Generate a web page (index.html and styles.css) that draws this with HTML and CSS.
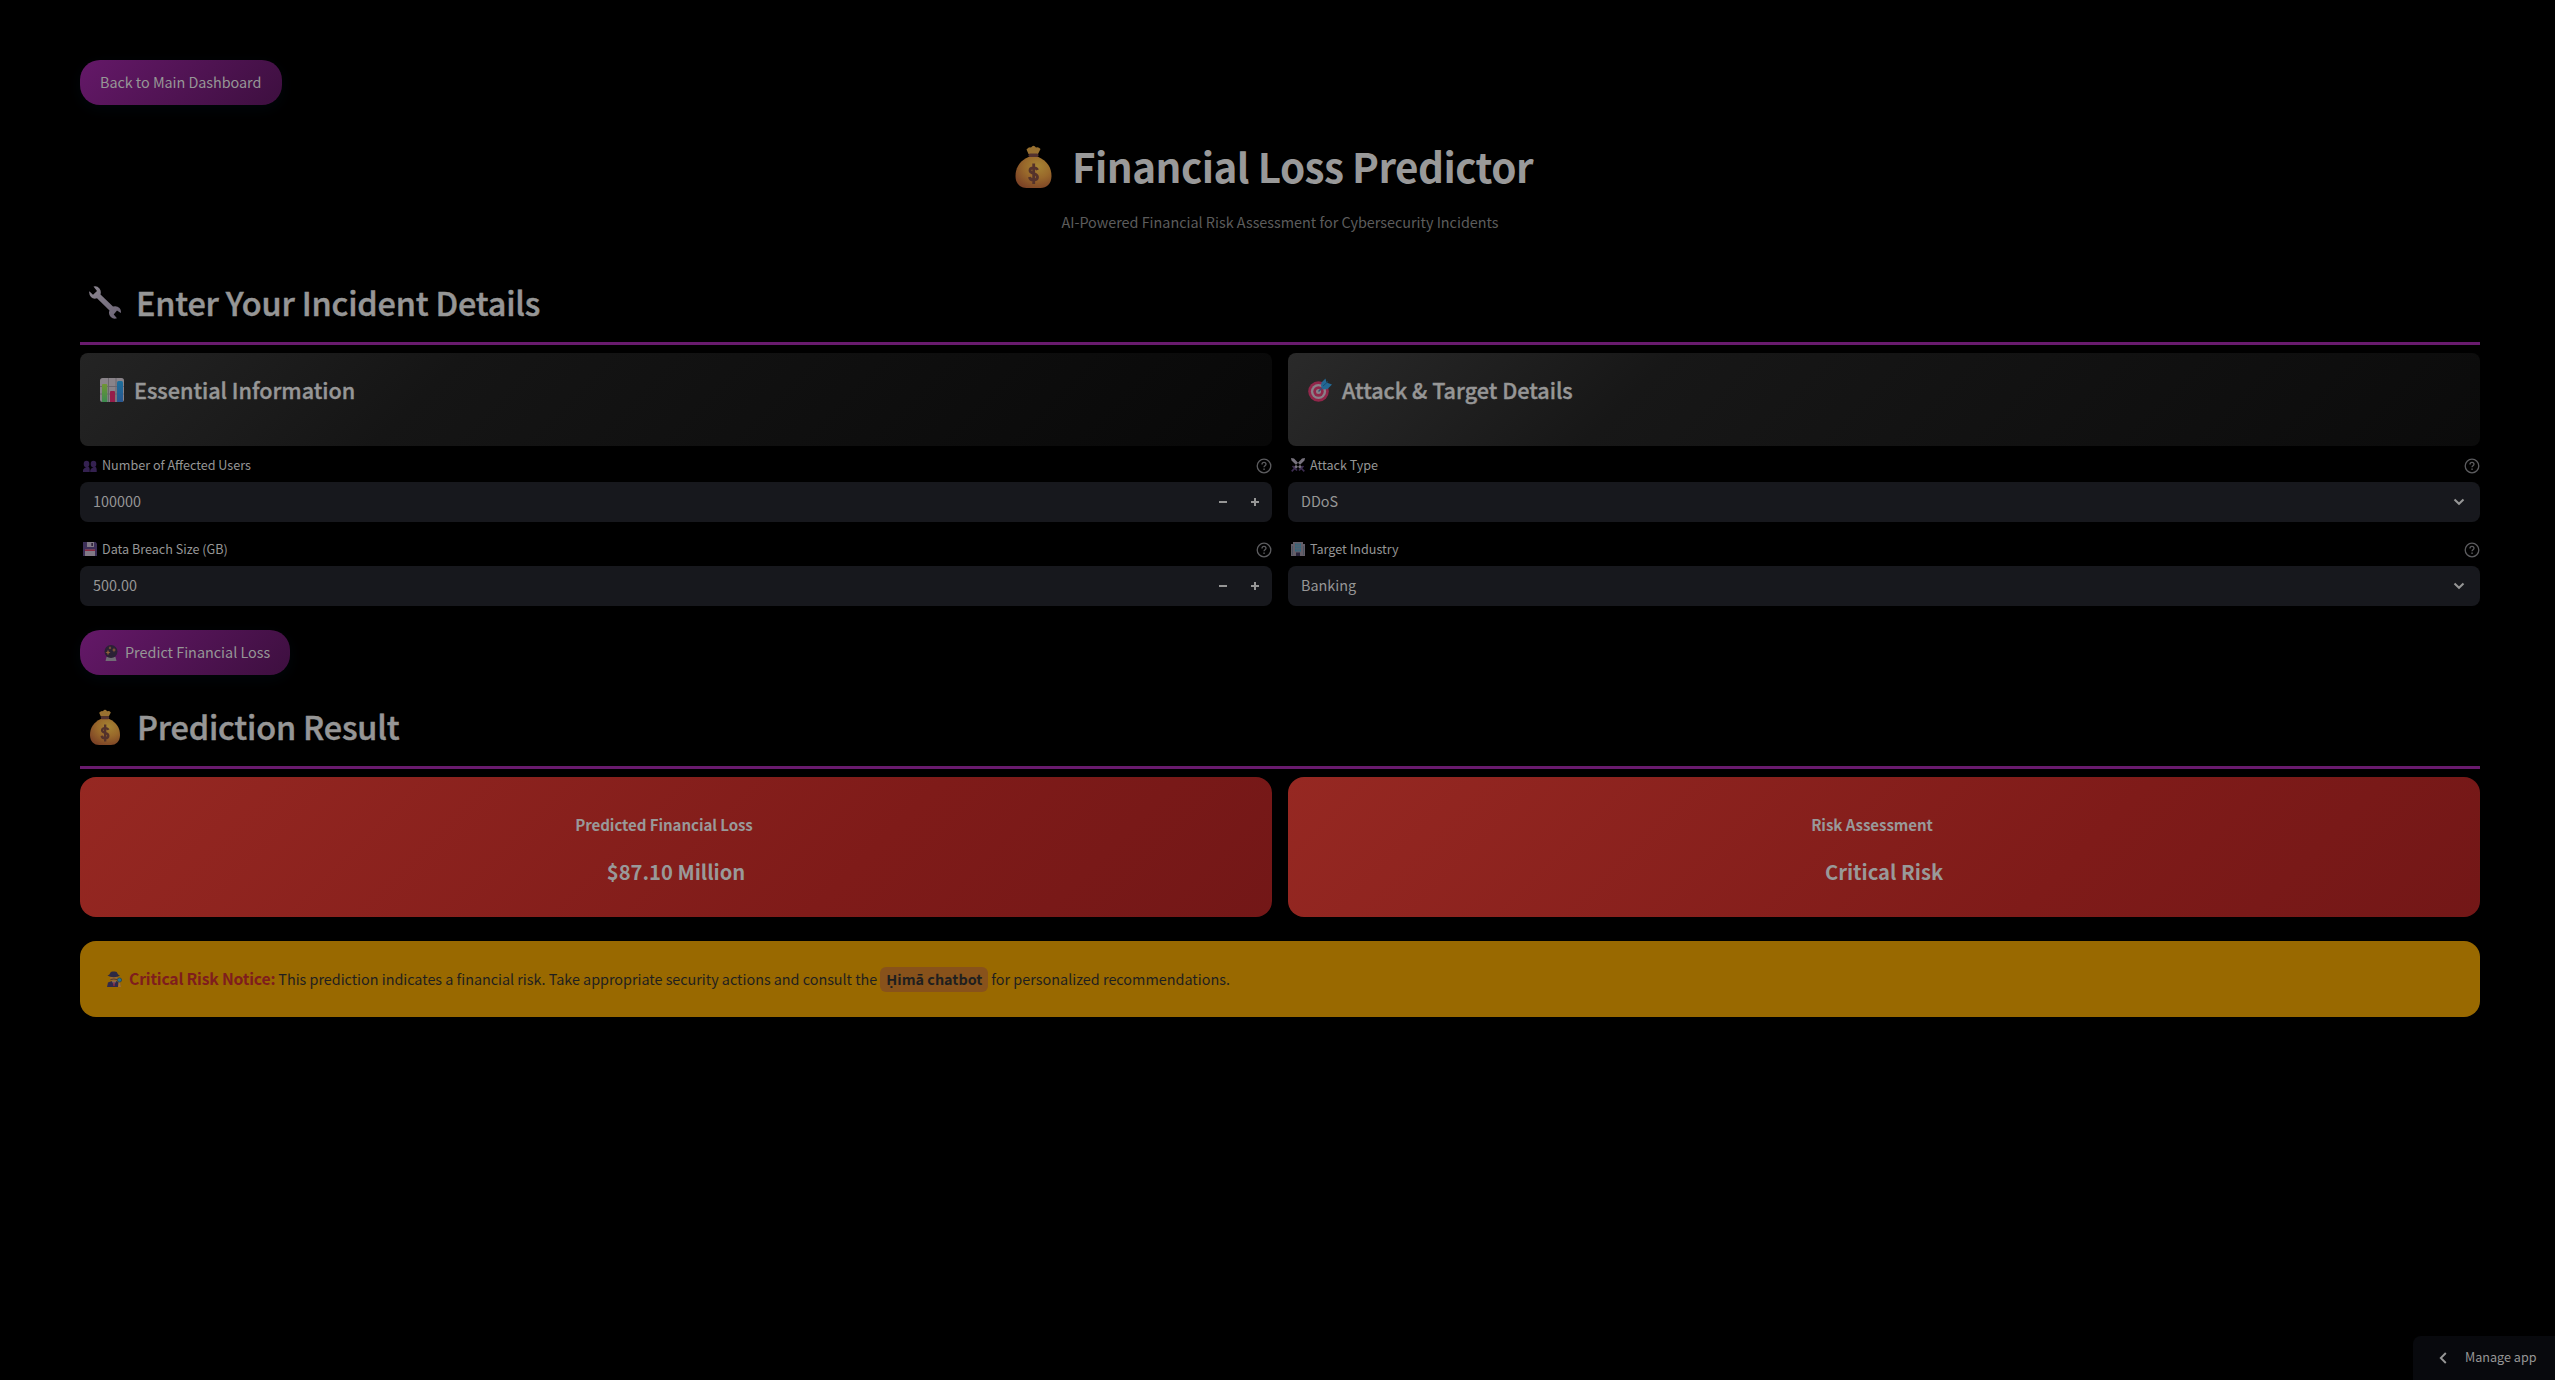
FILE: index.html
```html
<!DOCTYPE html>
<html lang="en">
<head>
<meta charset="utf-8">
<title>Financial Loss Predictor</title>
<link rel="stylesheet" href="styles.css">
</head>
<body>
<svg class="defs" aria-hidden="true">
  <defs>
    <radialGradient id="bagFill" cx=".62" cy=".3" r=".75"><stop offset="0" stop-color="#a58433"/><stop offset=".5" stop-color="#99692b"/><stop offset="1" stop-color="#7d4426"/></radialGradient>
    <linearGradient id="steel" x1="0" y1="0" x2="1" y2="1"><stop offset="0" stop-color="#8b858f"/><stop offset="1" stop-color="#6b6375"/></linearGradient>
    <linearGradient id="barGreen" x1="0" y1="0" x2="0" y2="1"><stop offset="0" stop-color="#6f9534"/><stop offset="1" stop-color="#3c8a50"/></linearGradient>
    <linearGradient id="barBlue" x1="0" y1="0" x2="0" y2="1"><stop offset="0" stop-color="#1d6f9b"/><stop offset="1" stop-color="#29568f"/></linearGradient>
    <symbol id="bag" viewBox="0 0 36 43">
      <path d="M13 9 11 4.500Q13.500 1.500 15.500 2.500 18-1 20.500 2.500 23 1.500 25 4L22.500 9Z" fill="#987030"/>
      <path d="M13 12C4 16 0 23 0 31 0 39 5 43 11 43H25C31 43 36 39 36 31 36 23 32 16 23 12Z" fill="url(#bagFill)"/>
      <rect x="13" y="8.500" width="10" height="3.600" rx="1.500" fill="#53322f"/>
      <path d="M22 25C21 22 14.500 22 14.500 25.500 14.500 29.500 22 27.500 22 32 22 36 14.500 36 14 32M18.200 18.500V39" fill="none" stroke="#54322b" stroke-width="2.800"/>
    </symbol>
    <symbol id="help" viewBox="0 0 16 16">
      <circle cx="8" cy="8" r="6.800" fill="none" stroke="#5c5c5f" stroke-width="1.300"/>
      <path d="M6 6.500C6 3.700 10 3.900 10 6.300 10 7.800 8 7.800 8 9.300" fill="none" stroke="#5c5c5f" stroke-width="1.300"/>
      <rect x="7.300" y="10.500" width="1.500" height="1.400" fill="#5c5c5f"/>
    </symbol>
    <symbol id="down" viewBox="0 0 12 8"><path d="M1.500 1.500 6 5.800 10.500 1.500" fill="none" stroke="#969696" stroke-width="2"/></symbol>
  </defs>
</svg>
<main class="page">
  <button class="btn btn-back"><span>Back to Main Dashboard</span></button>
  <h1 class="title"><svg class="bag-lg"><use href="#bag"/></svg><span>Financial Loss Predictor</span></h1>
  <p class="subtitle">AI-Powered Financial Risk Assessment for Cybersecurity Incidents</p>

  <h2 class="section">
    <svg class="wrench" viewBox="0 0 32 33"><path d="M4.500.5Q8-.5 10.500 2.500 12.500 5 11.500 8.500L24 20.500Q28 19.500 30.500 22 32.500 24.500 31.800 27L28 24.500 24.700 28.500 28 32.200Q24.500 33.500 21.800 31 19 28 20.500 24.500L8 12.200Q4.500 13.500 2 11-.3 8.500.3 5.300L4 8.800 8 5Z" fill="url(#steel)"/></svg>
    <span>Enter Your Incident Details</span>
  </h2>

  <div class="columns">
    <section class="column">
      <div class="card card-info">
        <svg class="card-icon" viewBox="0 0 24 24"><rect width="24" height="24" rx="2.500" fill="#898389"/><path d="M0 8.500H24M0 16H24M8.500 0V24M16 0V24" stroke="#6b666e"/><path d="M2 24V7Q2 6 3 6H6Q7.300 6 7.300 7V24Z" fill="url(#barGreen)"/><path d="M10 24V14Q10 13 11 13H14Q15 13 15 14V24Z" fill="#961d4a"/><path d="M17 24V4.500Q17 3 18.500 3H21.500Q23 3 23 4.500V24Z" fill="url(#barBlue)"/></svg>
        <h3>Essential Information</h3>
      </div>
      <div class="field">
        <label class="label"><svg class="label-icon" viewBox="0 0 14 14"><g fill="#342150"><ellipse cx="3.500" cy="6" rx="2.800" ry="3.200"/><ellipse cx="10.500" cy="6" rx="2.800" ry="3.200"/><path d="M0 14V12.500Q0 10.500 3.500 9T6.700 12.500V14ZM7.200 14V12.500Q7.200 10.500 10.500 9T13.700 12.500V14Z"/></g></svg><span>Number of Affected Users</span><svg class="help"><use href="#help"/></svg></label>
        <div class="input"><span>100000</span><div class="steps"><svg viewBox="0 0 8 8"><path d="M0 4H8" stroke="#969696" stroke-width="2"/></svg><svg viewBox="0 0 8 8"><path d="M0 4H8M4 0V8" stroke="#969696" stroke-width="2"/></svg></div></div>
      </div>
      <div class="field">
        <label class="label"><svg class="label-icon" viewBox="0 0 14 14"><path d="M0 0H12.500L14 1.500V14H0Z" fill="#3c2f58"/><path d="M4 0H11V5H4Z" fill="#817986"/><path d="M8.300 1H10V4H8.300Z" fill="#30233b"/><path d="M2 7.500H12V14H2Z" fill="#817986"/><path d="M2 7.500H12V9H2Z" fill="#8b2941"/></svg><span>Data Breach Size (GB)</span><svg class="help"><use href="#help"/></svg></label>
        <div class="input"><span>500.00</span><div class="steps"><svg viewBox="0 0 8 8"><path d="M0 4H8" stroke="#969696" stroke-width="2"/></svg><svg viewBox="0 0 8 8"><path d="M0 4H8M4 0V8" stroke="#969696" stroke-width="2"/></svg></div></div>
      </div>
    </section>
    <section class="column">
      <div class="card card-attack">
        <svg class="card-icon" viewBox="0 0 24 24"><circle cx="10.500" cy="13.500" r="10.300" fill="#91264a"/><circle cx="10.500" cy="13.500" r="7.600" fill="#8a8088"/><circle cx="10.500" cy="13.500" r="5.200" fill="#91264a"/><circle cx="10.500" cy="13.500" r="2.500" fill="#8a8088"/><path d="M10.500 13.500 16 8" stroke="#345074" stroke-width="1.500"/><path d="M13 8 13.500 4.500 17.500.5 18.500 4.500 24 6.500 19.500 11 15 11.500Z" fill="#236894"/><path d="M15 8 20 3.500" stroke="#174f79"/></svg>
        <h3>Attack &amp; Target Details</h3>
      </div>
      <div class="field">
        <label class="label"><svg class="label-icon" viewBox="0 0 14 14"><path d="M0 0 3 .5 11.500 9.500 9.500 11.300.5 2.500ZM14 0 11 .5 2.500 9.500 4.500 11.300 13.500 2.500Z" fill="#77727d"/><path d="M1.500 8 6 12.500M12.500 8 8 12.500M3.500 10.500.7 13.300M10.500 10.500 13.300 13.300" stroke="#3d2c52" stroke-width="1.700"/></svg><span>Attack Type</span><svg class="help"><use href="#help"/></svg></label>
        <div class="input"><span>DDoS</span><svg class="down"><use href="#down"/></svg></div>
      </div>
      <div class="field">
        <label class="label"><svg class="label-icon" viewBox="0 0 14 14"><path d="M0 2H2V0H12V2H14V14H0Z" fill="#645e68"/><path d="M4 1.500H10V9.500H4Z" fill="#2d6780"/><path d="M6 1V10M8 1V10M4 4H10M4 6.800H10" stroke="#645e68" stroke-width=".7"/><path d="M1.500 4V13M12.500 4V13" stroke="#4a5260"/><path d="M5 10.500H9V14H5Z" fill="#29233a"/></svg><span>Target Industry</span><svg class="help"><use href="#help"/></svg></label>
        <div class="input"><span>Banking</span><svg class="down"><use href="#down"/></svg></div>
      </div>
    </section>
  </div>

  <button class="btn btn-predict"><svg class="crystal" viewBox="0 0 14 16"><path d="M2.500 12H11.500L12.500 16H1.500Z" fill="#716c75"/><circle cx="7" cy="6.500" r="6.500" fill="#2b2135"/><path d="M4 4.500 4.700 6.800 6.500 7.500 4.700 8.200 4 10.500 3.300 8.200 1.500 7.500 3.300 6.800ZM10 2.500 10.600 4.400 12.300 5 10.600 5.600 10 7.500 9.400 5.600 7.700 5 9.400 4.400ZM6 1 6.500 2.500 7.500 3 6.500 3.500 6 4.500 5.500 3.500 4.500 3 5.500 2.500Z" fill="#94623a"/></svg><span>Predict Financial Loss</span></button>

  <h2 class="section section-result">
    <svg class="bag-md"><use href="#bag"/></svg>
    <span>Prediction Result</span>
  </h2>

  <div class="columns">
    <div class="metric"><h4>Predicted Financial Loss</h4><strong>$87.10 Million</strong></div>
    <div class="metric"><h4>Risk Assessment</h4><strong>Critical Risk</strong></div>
  </div>

  <div class="notice">
    <svg class="detective" viewBox="0 0 16 16"><path d="M1 16 2 11.500 6 10H10L14 12 14.500 16Z" fill="#312a4b"/><path d="M6 10H10L8 15Z" fill="#7d7580"/><path d="M7.500 11H8.500L9 15H7Z" fill="#7d263f"/><ellipse cx="7.800" cy="7" rx="3.600" ry="3.800" fill="#98682d"/><path d="M1.500 4.500Q3.500 4.200 4 2.500 4.500 0 7.500.6 11-.2 11.500 2.500 12 4 14 4.500 12 6.200 7.800 6.200T1.500 4.500Z" fill="#2d2944"/><path d="M4.500 8.500Q8 7.500 11 8.500" stroke="#51372d" fill="none"/><path d="M12.500 10.500 12 16H15L14 11Z" fill="#a27130"/><circle cx="13.500" cy="9" r="2.100" fill="#227394" stroke="#273e51" stroke-width=".7"/></svg>
    <strong>Critical Risk Notice:</strong><span class="advice">This prediction indicates a financial risk. Take appropriate security actions and consult the</span><b class="chip">Ḥimā chatbot</b><span>for personalized recommendations.</span>
  </div>
</main>
<div class="manage"><svg class="back" viewBox="0 0 8 12"><path d="M6.800 1 1.800 6 6.800 11" fill="none" stroke="#969696" stroke-width="1.900"/></svg><span>Manage app</span></div>
</body>
</html>
```
FILE: styles.css
```css
* { box-sizing: border-box; }
body {
  margin: 0;
  min-height: 1380px;
  background: #000;
  color: #969696;
  font-family: "Noto Sans CJK SC", "Noto Sans", sans-serif;
  font-size: 14.4px;
  line-height: 24px;
}
h1, h2, h3, h4, p { margin: 0; }
svg { display: block; flex: none; }
span, strong, h1, h2, h3, h4, b { white-space: nowrap; }
.defs { position: absolute; width: 0; height: 0; }
.page { width: 2400px; margin-left: 80px; padding-top: 60px; }

.btn {
  display: flex;
  align-items: center;
  height: 45px;
  padding: 0 20px;
  border: 0;
  border-radius: 20px;
  background: linear-gradient(135deg, #641868, #3d0f3f);
  box-shadow: 0 4px 15px rgba(0, 10, 16, .7);
  color: #969696;
  font: inherit;
}
.btn span, .input span, .manage span { padding-bottom: 2px; }
.btn-back { width: 202px; letter-spacing: -.04px; }
.btn-predict { width: 210px; margin-top: 24px; padding-left: 24px; }
.crystal { width: 14px; height: 16px; margin-right: 7px; }

.title {
  display: flex;
  align-items: center;
  height: 54px;
  margin: 35px 0 0 935px;
  color: #999;
  font-size: 40.4px;
  font-weight: 700;
  letter-spacing: -.52px;
}
.title span { padding-bottom: 3px; }
.bag-lg { width: 37px; height: 43px; margin: 0 20px 1px 0; }
.subtitle { margin: 16px 0 0; text-align: center; color: #5c5c5c; letter-spacing: -.01px; }

.section {
  display: flex;
  align-items: center;
  height: 80px;
  margin-top: 31px;
  padding: 0 0 2px 9px;
  border-bottom: 3px solid #691b6e;
  font-size: 32.4px;
  font-weight: 500;
  letter-spacing: -.17px;
  -webkit-text-stroke: .5px #969696;
}
.section span { padding-bottom: 1px; }
.section svg { -webkit-text-stroke: 0; }
.section-result { margin-top: 14px; padding-left: 10px; }
.wrench { width: 32px; height: 33px; margin-right: 15px; }
.bag-md { width: 30px; height: 36px; margin-right: 17px; }

.columns { display: grid; grid-template-columns: 1fr 1fr; gap: 16px; margin-top: 8px; }
.card { display: flex; height: 93px; padding: 24px 20px; border-radius: 8px; }
.card-info { background: linear-gradient(135deg, #242424, #151515 30%, #080808); }
.card-attack { background: linear-gradient(135deg, #2a2a2a, #171717 30%, #0b0b0b); }
.card-icon { width: 24px; height: 24px; margin: 1px 10px 0 0; }
.card h3 { padding-top: 1px; font-size: 21.6px; font-weight: 500; -webkit-text-stroke: .4px #969696; }

.field { margin-top: 8px; }
.field + .field { margin-top: 16px; }
.label { display: flex; align-items: center; height: 28px; padding: 0 0 4px 3px; font-size: 12.6px; }
.label span { padding-bottom: 2px; }
.label-icon { width: 14px; height: 14px; margin: 0 5px 2px 0; }
.help { width: 16px; height: 16px; margin-left: auto; }
.input { display: flex; align-items: center; justify-content: space-between; height: 40px; padding: 0 13px; border-radius: 8px; background: #17181d; }
.steps { display: flex; gap: 24px; }
.steps svg { width: 8px; height: 8px; }
.down { width: 12px; height: 8px; margin-right: 2px; }

.metric {
  display: flex;
  flex-direction: column;
  align-items: center;
  height: 140px;
  padding-top: 35px;
  border-radius: 16px;
  background: linear-gradient(135deg, #962822, #7f1b19 65%, #731717);
  color: #999;
}
.metric h4 { padding-right: 24px; font-size: 15.1px; letter-spacing: -.08px; }
.metric strong { margin-top: 24px; font-size: 20.2px; }

.notice {
  display: flex;
  align-items: center;
  height: 76px;
  margin-top: 24px;
  padding-left: 26px;
  border-radius: 16px;
  background: #996900;
  color: #1f1f1f;
}
.detective { width: 16px; height: 16px; margin-right: 7px; }
.notice strong { color: #7f1d1d; font-size: 15.8px; letter-spacing: -.22px; margin-right: 3px; }
.advice { letter-spacing: -.025px; }
.chip { height: 25px; margin: 0 3px; padding: 0 6px; border-radius: 6px; background: #88521b; }

.manage {
  position: absolute;
  right: 0;
  bottom: 0;
  display: flex;
  align-items: center;
  width: 142px;
  height: 44px;
  padding-left: 26px;
  border-radius: 8px 0 0;
  background: #08090d;
  font-size: 12.6px;
}
.back { width: 8px; height: 12px; margin-right: 18px; }
```
